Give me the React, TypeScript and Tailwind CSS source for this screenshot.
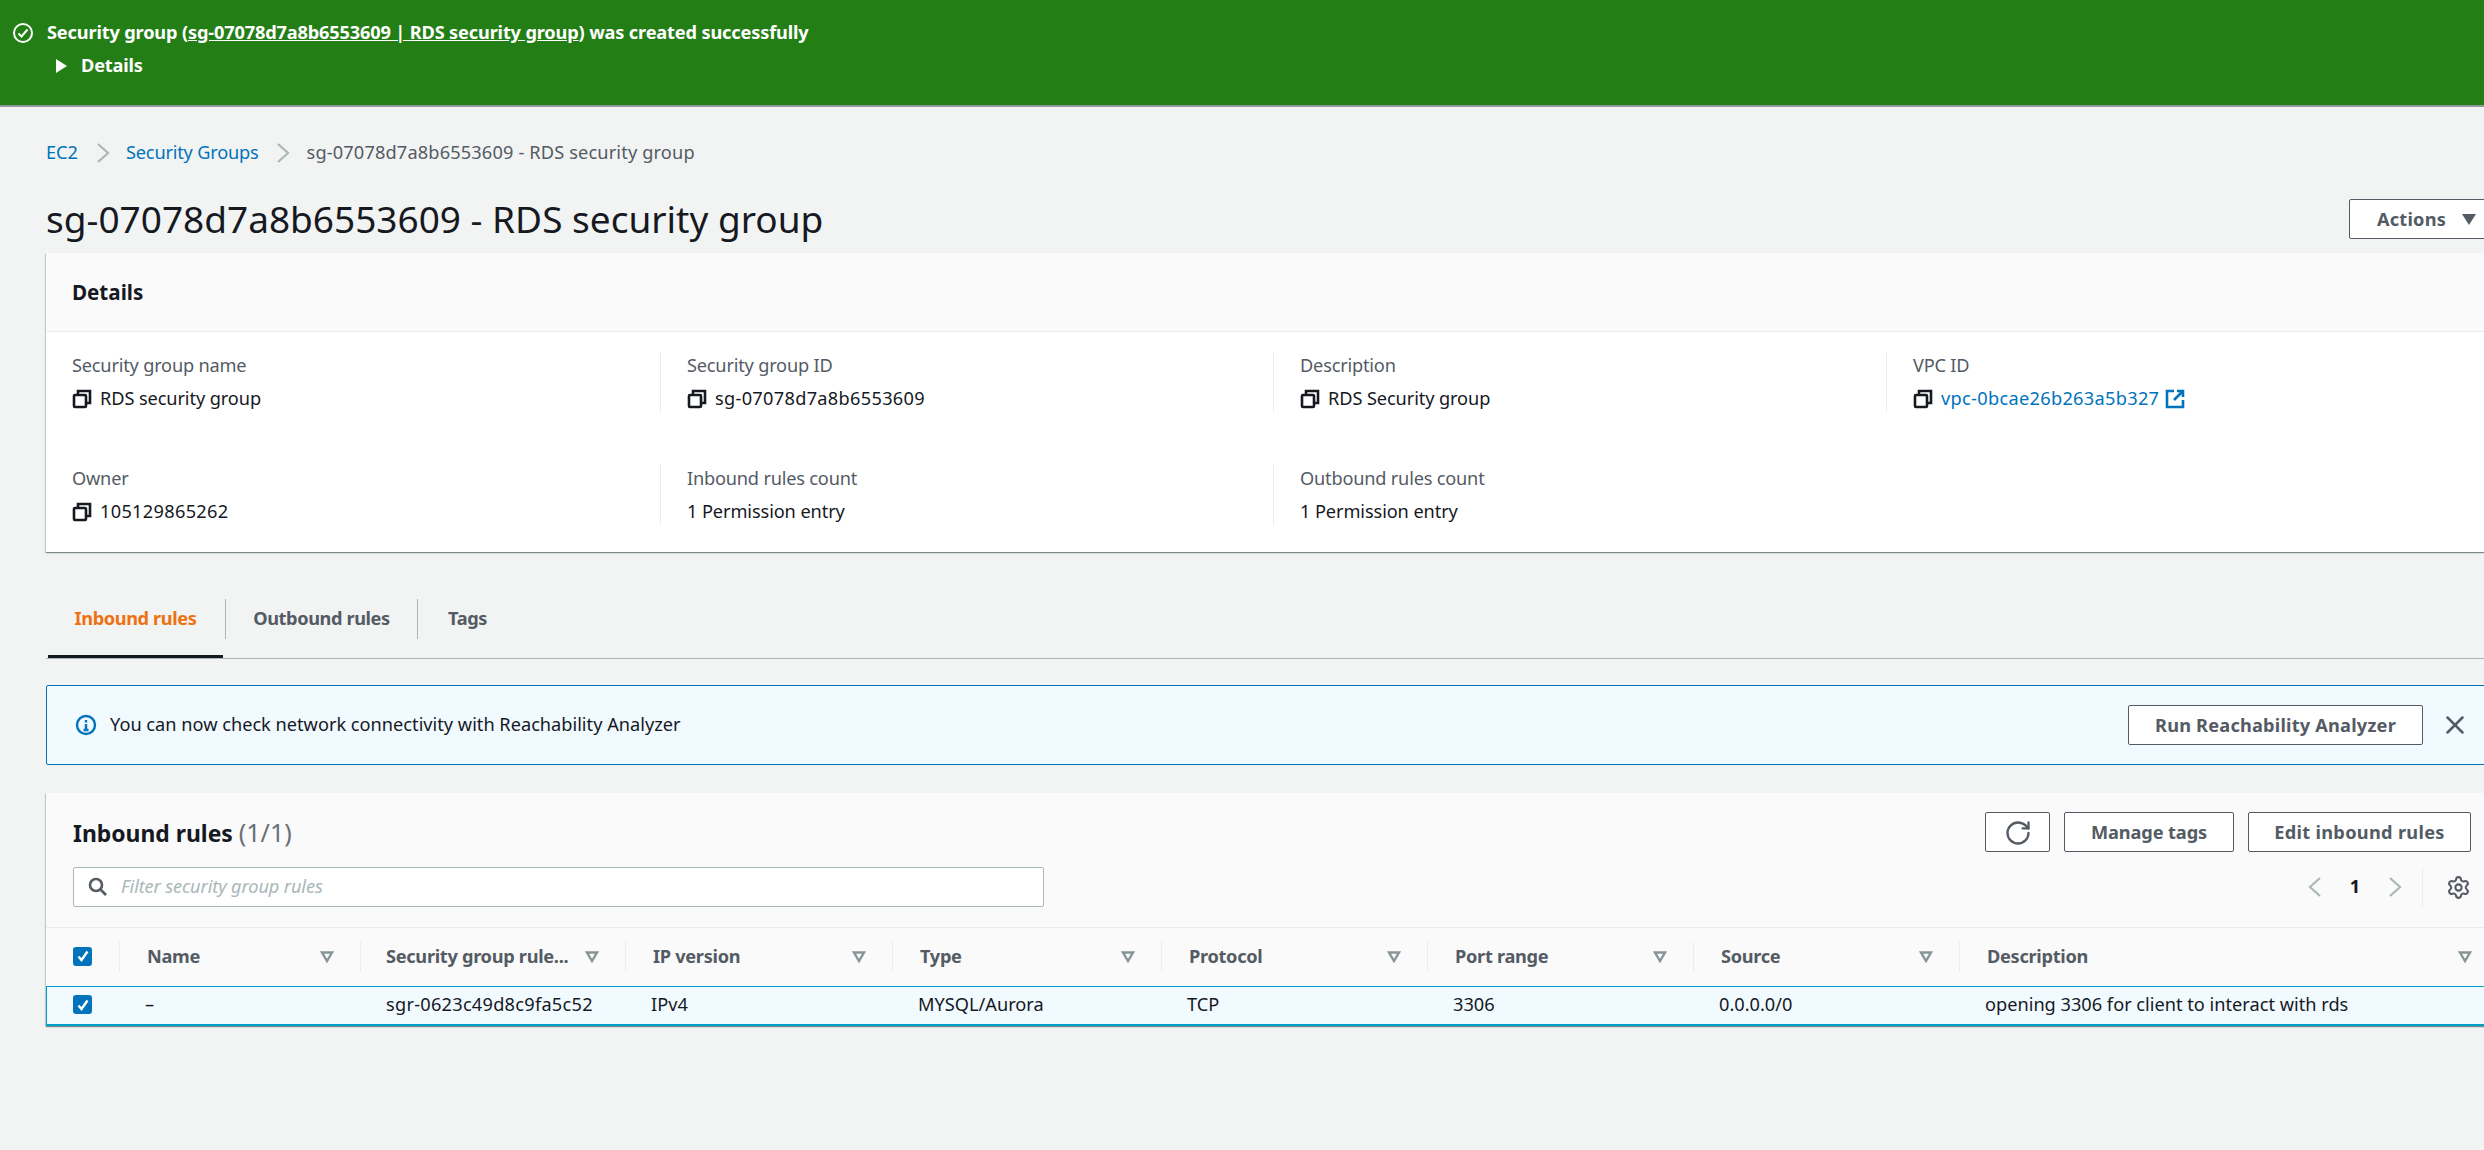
import { X, Settings, RotateCw } from 'lucide-react';

const font = 'font-["Noto_Sans",sans-serif]';

const CopyIcon = () => (
  <svg width="20" height="20" viewBox="0 0 20 20" fill="none" stroke="#16191f" strokeWidth="2.6" className="shrink-0">
    <rect x="2" y="6" width="12" height="12" rx="1" />
    <path d="M6 6V2h12v12h-4" />
  </svg>
);

const ExternalIcon = () => (
  <svg width="20" height="20" viewBox="0 0 20 20" fill="none" stroke="#0073bb" strokeWidth="2.6" className="ml-[-2px] shrink-0">
    <path d="M9 2H2v16h16v-7" />
    <path d="M12 2h6v6M18 2l-9 9" />
  </svg>
);

const FilterIcon = () => (
  <svg width="14" height="12" viewBox="0 0 14 12" fill="none" stroke="#879596" strokeWidth="2.4" className="shrink-0">
    <path d="M2 1.5h10L7 10z" />
  </svg>
);

const Chevron = ({ dir, color, className }: { dir: 'left' | 'right'; color: string; className?: string }) => (
  <svg width="14" height="20" viewBox="0 0 14 20" fill="none" stroke={color} strokeWidth="2.2" className={className}>
    <path d={dir === 'left' ? 'M12 1L2 10l10 9' : 'M2 1l10 9-10 9'} />
  </svg>
);

const Checkbox = () => (
  <span className="-mt-[2px] flex h-[19px] w-[19px] items-center justify-center rounded-[3px] bg-[#0073bb]">
    <svg width="14" height="14" viewBox="0 0 14 14" fill="none" stroke="#fff" strokeWidth="2.4">
      <path d="M2.5 7.5l3 3.5 6-8.5" />
    </svg>
  </span>
);

const Field = ({ label, value, copy, link, mono }: { label: string; value: string; copy?: boolean; link?: boolean; mono?: boolean }) => (
  <div className="h-[60px] pt-[1px]">
    <div className="leading-[24px] tracking-[-0.2px] text-[#545b64]">{label}</div>
    <div className="mt-[10px] flex h-[24px] items-center gap-[8px]">
      {copy && <CopyIcon />}
      <span className={`${link ? 'text-[#0073bb]' : 'text-[#16191f]'} ${mono ? 'tracking-[0.3px]' : 'tracking-[-0.1px]'}`}>{value}</span>
      {link && <ExternalIcon />}
    </div>
  </div>
);

const Button = ({ children, className }: { children: React.ReactNode; className: string }) => (
  <button className={`flex h-[40px] items-center justify-center rounded-[2px] border border-[#545b64] bg-white pt-[1px] font-bold text-[#545b64] ${className}`}>
    {children}
  </button>
);

const columns = [
  { name: 'Name', value: '–' },
  { name: 'Security group rule...', value: 'sgr-0623c49d8c9fa5c52' },
  { name: 'IP version', value: 'IPv4' },
  { name: 'Type', value: 'MYSQL/Aurora' },
  { name: 'Protocol', value: 'TCP' },
  { name: 'Port range', value: '3306' },
  { name: 'Source', value: '0.0.0.0/0' },
  { name: 'Description', value: 'opening 3306 for client to interact with rds' },
];

const gridCols = 'grid-cols-[73px_241px_265px_267px_269px_266px_266px_266px_539px]';
const cardShadow = 'shadow-[0_1px_1px_0_rgba(0,28,36,0.3),1px_1px_1px_0_rgba(0,28,36,0.15),-1px_1px_1px_0_rgba(0,28,36,0.15)]';

export default function App() {
  return (
    <div className={`h-[1150px] w-[2484px] overflow-hidden bg-[#f2f3f3] text-[18.2px] ${font}`}>
      {/* flash */}
      <div className="h-[107px] border-b-2 border-[#8d9a9b] bg-[#237e15] pl-[12px] pt-[20px] font-bold tracking-[-0.16px] text-white">
        <div className="flex h-[26px] items-center gap-[13px]">
          <svg width="22" height="22" viewBox="0 0 22 22" fill="none" stroke="#fff" strokeWidth="2">
            <circle cx="11" cy="11" r="9" />
            <path d="M6.5 11.5l3 3 6-7" />
          </svg>
          <span>
            Security group (<span className="underline">sg-07078d7a8b6553609 | RDS security group</span>) was created successfully
          </span>
        </div>
        <div className="ml-[44px] mt-[7px] flex h-[26px] items-center gap-[14px]">
          <span className="h-0 w-0 border-y-[7px] border-l-[11px] border-y-transparent border-l-white" />
          <span>Details</span>
        </div>
      </div>

      <div className="w-[2546px] pl-[46px]">
        {/* breadcrumb */}
        <div className="mt-[33px] flex h-[26px] items-center">
          <span className="text-[#0073bb]">EC2</span>
          <Chevron dir="right" color="#aab7b8" className="ml-[18px] mr-[16px]" />
          <span className="tracking-[-0.2px] text-[#0073bb]">Security Groups</span>
          <Chevron dir="right" color="#aab7b8" className="mx-[17px]" />
          <span className="tracking-[0.15px] text-[#545b64]">sg-07078d7a8b6553609 - RDS security group</span>
        </div>

        {/* title */}
        <div className="mt-[25px] flex h-[62px] items-start justify-between">
          <h1 className="text-[37px] leading-[56px] text-[#16191f]">sg-07078d7a8b6553609 - RDS security group</h1>
          <Button className="mt-[8px] w-[197px] !justify-start gap-[16px] pl-[27px] tracking-[0.2px]">
            Actions
            <span className="h-0 w-0 border-x-[7px] border-t-[11px] border-x-transparent border-t-[#545b64]" />
          </Button>
        </div>

        {/* details card */}
        <div className={`h-[299px] bg-white ${cardShadow}`}>
          <div className="flex h-[79px] items-center border-b border-[#eaeded] bg-[#fafafa] pl-[26px] text-[20.6px] font-bold text-[#16191f]">
            Details
          </div>
          <div className="grid grid-cols-[614px_613px_613px_614px] gap-y-[53px] pt-[20px]">
            <div className="pl-[26px]"><Field label="Security group name" value="RDS security group" copy /></div>
            <div className="border-l border-[#eaeded] pl-[26px]"><Field label="Security group ID" value="sg-07078d7a8b6553609" copy mono /></div>
            <div className="border-l border-[#eaeded] pl-[26px]"><Field label="Description" value="RDS Security group" copy /></div>
            <div className="border-l border-[#eaeded] pl-[26px]"><Field label="VPC ID" value="vpc-0bcae26b263a5b327" copy link mono /></div>
            <div className="pl-[26px]"><Field label="Owner" value="105129865262" copy mono /></div>
            <div className="border-l border-[#eaeded] pl-[26px]"><Field label="Inbound rules count" value="1 Permission entry" /></div>
            <div className="border-l border-[#eaeded] pl-[26px]"><Field label="Outbound rules count" value="1 Permission entry" /></div>
          </div>
        </div>

        {/* tabs */}
        <div className="mt-[47px] flex h-[60px] items-start border-b border-[#aab7b8] font-bold tracking-[-0.4px] text-[#545b64]">
          <div className="ml-[2px] h-[59px] w-[175px] border-b-[3px] border-[#16191f] text-center leading-[38px] text-[#ec7211]">Inbound rules</div>
          <div className="ml-[2px] h-[40px] w-[192px] border-l border-[#aab7b8] text-center leading-[38px]">Outbound rules</div>
          <div className="h-[40px] w-[100px] border-l border-[#aab7b8] text-center leading-[38px]">Tags</div>
        </div>

        {/* info alert */}
        <div className="mt-[26px] flex h-[80px] items-center rounded-[2px] border border-[#0073bb] bg-[#f1faff] pl-[28px] pr-[75px] text-[#16191f]">
          <svg width="22" height="22" viewBox="0 0 22 22" fill="none" stroke="#0073bb" strokeWidth="2.4">
            <circle cx="11" cy="11" r="9" />
            <path d="M11 10v6M11 6v2.5M8.5 16h5" />
          </svg>
          <span className="ml-[13px]">You can now check network connectivity with Reachability Analyzer</span>
          <Button className="ml-auto w-[295px] tracking-[0.2px]">Run Reachability Analyzer</Button>
          <X size={30} strokeWidth={2} className="ml-[17px] text-[#545b64]" />
        </div>

        {/* table card */}
        <div className={`mt-[28px] h-[233px] bg-[#fafafa] ${cardShadow}`}>
          <div className="flex h-[135px] items-start justify-between border-b border-[#eaeded] pl-[27px] pt-[19px]">
            <div>
              <div className="h-[40px] text-[22.9px] font-bold leading-[40px] text-[#16191f]">
                Inbound rules <span className="text-[25px] font-normal text-[#687078]">(1/1)</span>
              </div>
              <div className="mt-[15px] flex h-[40px] w-[971px] items-center gap-[13px] rounded-[2px] border border-[#aab7b8] bg-white pl-[14px] italic tracking-[-0.12px] text-[#aab7b8]">
                <svg width="20" height="20" viewBox="0 0 20 20" fill="none" stroke="#545b64" strokeWidth="2.6" className="shrink-0">
                  <circle cx="8" cy="8" r="6" />
                  <path d="M12.5 12.5L18 18" />
                </svg>
                Filter security group rules
              </div>
            </div>
            <div className="mr-[75px] w-[500px]">
              <div className="flex justify-end gap-[14px]">
                <Button className="w-[65px]"><RotateCw size={28} strokeWidth={2} /></Button>
                <Button className="w-[170px] tracking-[-0.1px]">Manage tags</Button>
                <Button className="w-[223px] tracking-[0.3px]">Edit inbound rules</Button>
              </div>
              <div className="mt-[15px] flex h-[40px] items-center justify-end text-[#16191f]">
                <Chevron dir="left" color="#aab7b8" />
                <span className="w-[66px] text-center font-bold">1</span>
                <Chevron dir="right" color="#aab7b8" />
                <span className="ml-[20px] mr-[23px] h-[40px] border-l border-[#eaeded]" />
                <Settings size={25} strokeWidth={2} className="text-[#545b64]" />
              </div>
            </div>
          </div>

          <div className={`grid h-[58px] items-center ${gridCols}`}>
            <div className="pl-[27px]"><Checkbox /></div>
            {columns.map(col => (
              <div key={col.name} className="flex h-[30px] items-center justify-between border-l border-[#eaeded] pl-[27px] pr-[26px] font-bold tracking-[-0.3px] text-[#545b64]">
                <span className={`whitespace-nowrap ${col.name === 'Security group rule...' ? '-ml-[2px]' : ''}`}>{col.name}</span>
                <FilterIcon />
              </div>
            ))}
          </div>

          <div className={`grid h-[40px] items-center border-x border-t border-b-2 border-[#00a1c9] bg-[#f1faff] text-[#16191f] ${gridCols}`}>
            <div className="pl-[26px]"><Checkbox /></div>
            {columns.map(col => (
              <div key={col.name} className={`-mt-[2px] whitespace-nowrap pl-[25px] ${col.name === 'Security group rule...' ? 'tracking-[0.25px]' : ''}`}>{col.value}</div>
            ))}
          </div>
        </div>
      </div>
    </div>
  );
}
